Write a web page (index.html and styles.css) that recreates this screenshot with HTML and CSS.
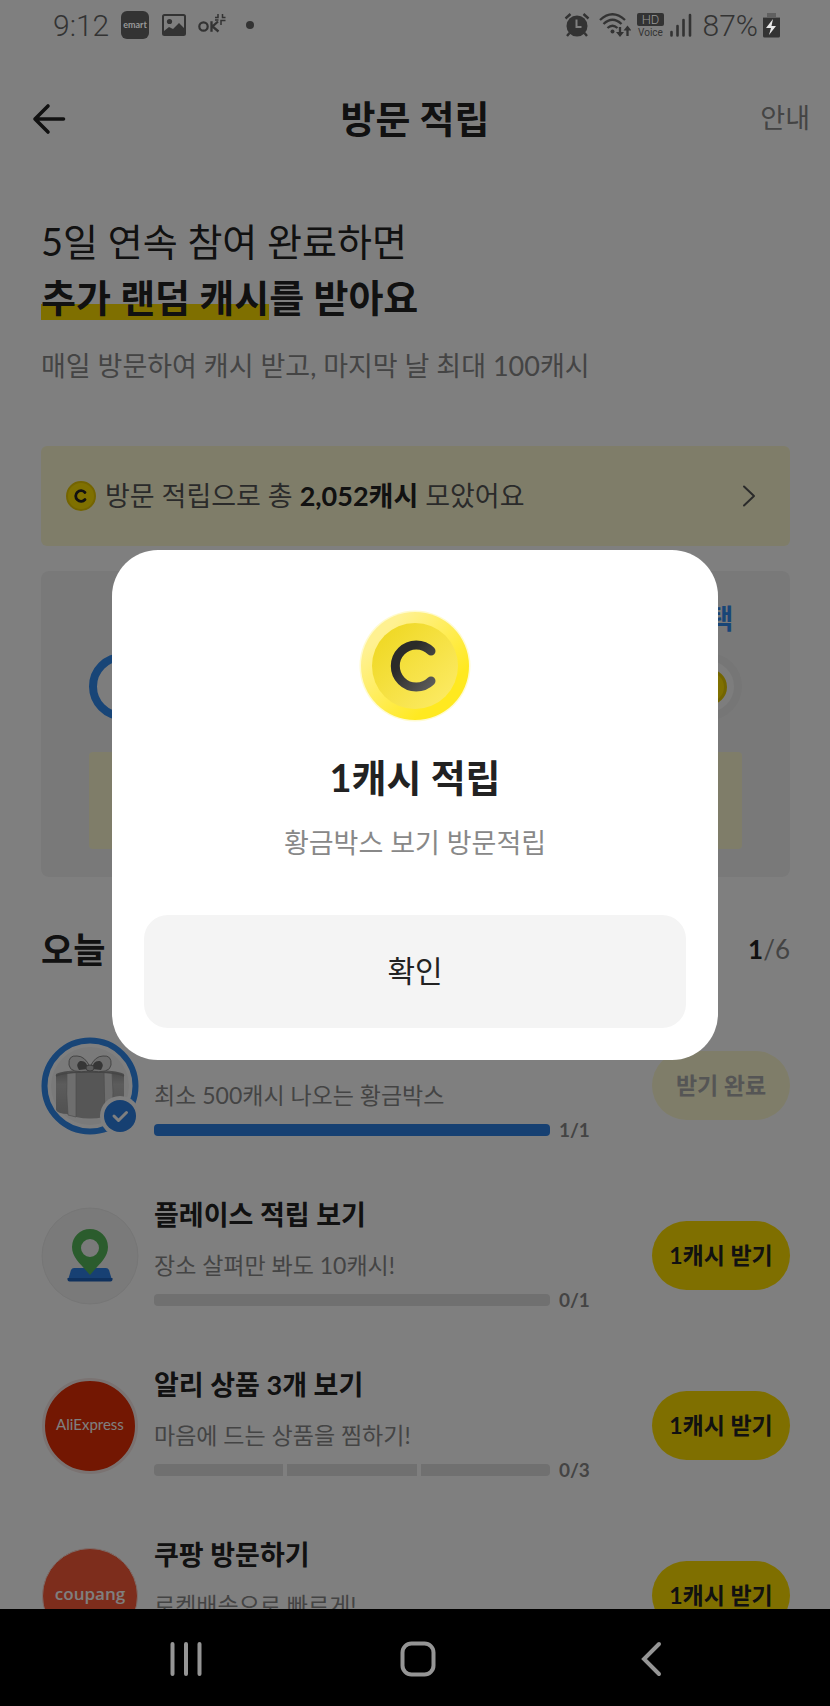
FILE: index.html
```html
<!DOCTYPE html>
<html lang="ko">
<head>
<meta charset="utf-8">
<meta name="viewport" content="width=device-width, initial-scale=1">
<title>방문 적립</title>
<link rel="stylesheet" href="styles.css">
</head>
<body>
<div class="device">
  <div class="app">
    <div class="status">
      <span class="status-time">9:12</span>
      <svg class="ic-emart" width="28" height="28" viewBox="0 0 28 28"><rect width="28" height="28" rx="6" fill="#333"/><text x="14" y="17" text-anchor="middle" font-family="Lato, sans-serif" font-weight="700" font-size="9" fill="#999">emart</text></svg>
      <svg class="ic-photo" width="24" height="22" viewBox="0 0 24 22"><rect x="1" y="1" width="22" height="20" rx="1.500" fill="none" stroke="#333" stroke-width="2"/><circle cx="7.500" cy="7.500" r="2.600" fill="#333"/><path d="M2 17l5-4 4 2 6-6 5 5v7H2z" fill="#333"/></svg>
      <svg class="ic-ok" width="28" height="24" viewBox="0 0 28 24"><circle cx="5.500" cy="13.500" r="4.200" fill="none" stroke="#333" stroke-width="2.200"/><path d="M13.500 8.300v10.400M20 8.500l-5.500 5 6 5" fill="none" stroke="#333" stroke-width="2.300"/><path d="M17 4.500h3V1M27.500 4.500h-3V1M17 7h3.500M23 12V7.500h4.500" fill="none" stroke="#333" stroke-width="1.500"/></svg>
      <span class="dot"></span>
      <span class="status-space"></span>
      <svg class="ic-alarm" width="26" height="26" viewBox="0 0 26 26"><circle cx="13" cy="14" r="10.500" fill="#333"/><path d="M1.500 6.500l5-4.500M24.500 6.500l-5-4.500M5.500 21l-2.500 3M20.500 21l2.500 3" stroke="#333" stroke-width="2.400"/><path d="M12.500 7.500V15h5" fill="none" stroke="#808080" stroke-width="2"/></svg>
      <svg class="ic-wifi" width="32" height="26" viewBox="0 0 32 26"><g fill="none" stroke="#333" stroke-width="2.300"><path d="M1 8q12.500-11.500 25 0M4.500 12q9-8.500 18 0M8.500 16q5-4.500 10 0"/><path d="M21 15v7M28.500 24v-7"/></g><circle cx="13.500" cy="19.500" r="2" fill="#333"/><path d="M17 20h8l-4 5zM24.500 18.500h8l-4-5z" fill="#333"/></svg>
      <svg class="ic-hd" width="27" height="24" viewBox="0 0 27 24"><rect width="27" height="13" rx="2" fill="#333"/><text x="13.500" y="11" text-anchor="middle" font-family="Roboto, sans-serif" font-size="13" fill="#999">HD</text><text x="13.500" y="22.500" text-anchor="middle" font-family="Roboto, sans-serif" font-weight="400" font-size="10" fill="#333">Voice</text></svg>
      <svg class="ic-signal" width="22" height="24" viewBox="0 0 22 24"><path d="M1.500 19v3.500M7.500 13v9.500M13.500 7v15.500M20 2v20.500" stroke="#333" stroke-width="2.600" stroke-linecap="round"/></svg>
      <span class="status-pct">87%</span>
      <svg class="ic-batt" width="17" height="26" viewBox="0 0 17 26"><path d="M4 1h9v4h4v3H0V5h4z" fill="#606060"/><path d="M0 6h17v18a1.500 1.500 0 0 1-1.500 1.500h-14A1.500 1.500 0 0 1 0 24z" fill="#333"/><path d="M10 7L3 16h5l-2 7 7-9H8.500z" fill="#e8e8e8"/></svg>
    </div>

    <header class="topbar">
      <button class="back" type="button" aria-label="뒤로"><svg width="34" height="32" viewBox="0 0 34 32"><path d="M16 3L3 16l13 13M3 16h28.500" fill="none" stroke="#222" stroke-width="3.600" stroke-linecap="round" stroke-linejoin="round"/></svg></button>
      <h1>방문 적립</h1>
      <a class="guide" href="#guide">안내</a>
    </header>

    <main class="content">
      <section class="intro">
        <h2>5일 연속 참여 완료하면<br><strong><mark>추가 랜덤 캐시</mark>를 받아요</strong></h2>
        <p>매일 방문하여 캐시 받고, 마지막 날 최대 100캐시</p>
      </section>

      <a class="banner" href="#history">
        <svg width="30" height="30" viewBox="0 0 30 30"><circle cx="15" cy="15" r="14" fill="#ffe000" stroke="#e8c900" stroke-width="2"/><path d="M19 11.500a5.300 5.300 0 1 0 0 7" fill="none" stroke="#222" stroke-width="2.800" stroke-linecap="round"/></svg>
        <span>방문 적립으로 총 <b>2,052캐시</b> 모았어요</span>
        <svg class="chev" width="14" height="22" viewBox="0 0 14 22"><path d="M2 1.500L12 11 2 20.500" fill="none" stroke="#555" stroke-width="2" stroke-linecap="round" stroke-linejoin="round"/></svg>
      </a>

      <section class="stamps">
        <div class="stamp-row">
          <div class="stamp"><span class="stamp-ring done"></span></div>
          <div class="stamp"><span class="stamp-label">혜택</span><span class="stamp-ring"><span class="mini-coin"></span></span></div>
        </div>
        <div class="stamp-note"></div>
      </section>

      <div class="section-head"><h3>오늘</h3><span class="count"><b>1</b>/6</span></div>

      <ul class="tasks">
        <li class="task">
          <svg class="task-icon" width="98" height="98" viewBox="0 0 98 98">
            <defs><linearGradient id="giftShade" x1="0" x2="0" y1="0" y2="1"><stop offset="0" stop-color="#8f8f8f"/><stop offset=".3" stop-color="#b8b8b8"/><stop offset="1" stop-color="#a0a0a0"/></linearGradient></defs>
            <circle cx="49" cy="49" r="45.500" fill="#fff" stroke="#318aef" stroke-width="6"/><circle cx="49" cy="49" r="39" fill="#f4f4f4"/>
            <path d="M15 37q8-4 34-4t34 4v36q-2 4-12 4-12 4-22 4t-22-4q-10 0-12-4z" fill="url(#giftShade)"/>
            <path d="M35 36q14-3 28 0v44q-14 3-28 0z" fill="#acacac"/>
            <path d="M26 35l9-1v46l-8-2q-2-20-1-43zM63 34l8 1q2 20 0 43l-7 2z" fill="#dcdcdc" stroke="#999" stroke-width=".7"/>
            <path d="M15 39q8-4 34-4t34 4" fill="none" stroke="#8c8c8c" stroke-width="1.500"/>
            <path d="M49 34q-20 3-21-6-1-10 8-9 8 0 13 11 5-11 13-11 9-1 8 9-1 9-21 6z" fill="#dcdcdc" stroke="#888" stroke-width="1"/>
            <path d="M47 32q-1-9-8-8-5 3-1 9zM51 32q1-9 8-8 5 3 1 9z" fill="#6c6c6c"/><ellipse cx="49" cy="31" rx="4" ry="3" fill="#bbb" stroke="#777"/>
            <circle cx="79" cy="79" r="20" fill="#fff"/><circle cx="79" cy="79" r="16" fill="#2c80e4"/><path d="M73 79l4.500 4.500 8-8" fill="none" stroke="#fff" stroke-width="3" stroke-linecap="round" stroke-linejoin="round"/>
          </svg>
          <div class="task-body"><h4>황금박스 보기</h4><p>최소 500캐시 나오는 황금박스</p><div class="progress"><div class="bar"><i class="on"></i></div><span>1/1</span></div></div>
          <button class="claim" type="button" disabled>받기 완료</button>
        </li>
        <li class="task">
          <svg class="task-icon" width="98" height="98" viewBox="0 0 98 98">
            <circle cx="49" cy="49" r="48" fill="#f4f4f4" stroke="#ececec"/>
            <path d="M33 61h32q2 0 3 2l3 10H27l3-10q1-2 3-2z" fill="#2f80e6"/><path d="M26.500 71h45v1.500q0 2-2 2h-41q-2 0-2-2z" fill="#1f62bd"/>
            <path d="M49 22a18 18 0 0 1 18 18c0 11-9 17-18 28-9-11-18-17-18-28a18 18 0 0 1 18-18zm0 10a9 9 0 1 0 0 18 9 9 0 0 0 0-18z" fill="#56b95a" fill-rule="evenodd"/>
          </svg>
          <div class="task-body"><h4>플레이스 적립 보기</h4><p>장소 살펴만 봐도 10캐시!</p><div class="progress"><div class="bar"><i></i></div><span>0/1</span></div></div>
          <button class="claim" type="button">1캐시 받기</button>
        </li>
        <li class="task">
          <svg class="task-icon" width="98" height="98" viewBox="0 0 98 98"><circle cx="49" cy="49" r="46.500" fill="#e62e04" stroke="#f5e6e4" stroke-width="3"/><text x="49" y="53" text-anchor="middle" font-family="Lato, sans-serif" font-size="15" fill="#fff">AliExpress</text></svg>
          <div class="task-body"><h4>알리 상품 3개 보기</h4><p>마음에 드는 상품을 찜하기!</p><div class="progress"><div class="bar"><i></i><i></i><i></i></div><span>0/3</span></div></div>
          <button class="claim" type="button">1캐시 받기</button>
        </li>
        <li class="task">
          <svg class="task-icon" width="98" height="98" viewBox="0 0 98 98"><circle cx="49" cy="49" r="47.500" fill="#fb5a38" stroke="#f8dcd6"/><text x="49" y="53" text-anchor="middle" font-family="'Open Sans', sans-serif" font-weight="600" font-size="17" fill="#fff">coupang</text></svg>
          <div class="task-body"><h4>쿠팡 방문하기</h4><p>로켓배송으로 빠르게!</p><div class="progress"><div class="bar"><i></i></div><span>0/1</span></div></div>
          <button class="claim" type="button">1캐시 받기</button>
        </li>
      </ul>
    </main>

    <div class="scrim">
      <div class="modal" role="dialog" aria-modal="true" aria-labelledby="modal-title">
        <svg width="116" height="116" viewBox="0 0 116 116">
          <defs>
            <linearGradient id="rim" x1="0" y1="0" x2="1" y2="1"><stop offset=".2" stop-color="#fff191"/><stop offset=".75" stop-color="#ffe920"/></linearGradient>
            <linearGradient id="face" x1="0" y1="0" x2="1" y2="1"><stop offset=".1" stop-color="#efd823"/><stop offset=".85" stop-color="#fbe95f"/></linearGradient>
            <linearGradient id="letter" x1="0" y1="0" x2="1" y2="1"><stop offset=".3" stop-color="#2b2b29"/><stop offset="1" stop-color="#5c5c5a"/></linearGradient>
          </defs>
          <circle cx="58" cy="57" r="55.500" fill="#fffbd0"/><circle cx="58" cy="57" r="54" fill="url(#rim)"/><circle cx="58" cy="57" r="43" fill="url(#face)"/>
          <path d="M74 42A21 21 0 1 0 74 72" fill="none" stroke="url(#letter)" stroke-width="9" stroke-linecap="round"/>
        </svg>
        <h2 id="modal-title">1캐시 적립</h2>
        <p>황금박스 보기 방문적립</p>
        <button class="confirm" type="button">확인</button>
      </div>
    </div>
  </div>

  <nav class="sysnav">
    <button type="button" aria-label="최근 앱"><svg width="32" height="36" viewBox="0 0 32 36"><path d="M2.500 3v30M16 3v30M29.500 3v30" stroke="#959595" stroke-width="4" stroke-linecap="round"/></svg></button>
    <button type="button" aria-label="홈"><svg width="36" height="36" viewBox="0 0 36 36"><rect x="2.500" y="2.500" width="31" height="31" rx="9" fill="none" stroke="#959595" stroke-width="4"/></svg></button>
    <button type="button" aria-label="뒤로 가기"><svg width="22" height="36" viewBox="0 0 22 36"><path d="M19 3L4 18l15 15" fill="none" stroke="#959595" stroke-width="4" stroke-linecap="round"/></svg></button>
  </nav>
</div>
</body>
</html>
```
FILE: styles.css
```css
* { box-sizing: border-box; }
body, h1, h2, h3, h4, p, ul { margin: 0; padding: 0; }
body {
  font-family: Lato, "Noto Sans CJK KR", sans-serif;
  color: #222;
  background: #fff;
}
button { border: 0; padding: 0; background: none; font: inherit; color: inherit; }
a { color: inherit; text-decoration: none; }
svg { display: block; flex: none; }

.device { display: flex; flex-direction: column; height: 100vh; background: #000; }
.app { position: relative; flex: 1; min-height: 0; overflow: hidden; background: #fff; }

/* Status bar stays above the scrim */
.status {
  position: relative;
  z-index: 2;
  display: flex;
  align-items: center;
  height: 50px;
  padding: 0 50px 0 53px;
  font-family: Roboto, sans-serif;
  font-weight: 300;
  font-size: 30px;
  color: #333;
}
.status-space { flex: 1; }
.ic-emart { margin-left: 12px; }
.ic-photo { margin-left: 13px; }
.ic-ok { margin-left: 12px; }
.dot { width: 8px; height: 8px; margin-left: 20px; border-radius: 50%; background: #333; }
.ic-wifi { margin-left: 9px; }
.ic-hd { margin-left: 6px; }
.ic-signal { margin: 0 11px 0 6px; }
.ic-batt { margin-left: 5px; }

.topbar {
  display: grid;
  grid-template-columns: 1fr auto 1fr;
  align-items: center;
  height: 136px;
  padding: 0 20px;
}
.topbar h1 { font-size: 38px; line-height: 56px; }
.back { justify-self: start; padding: 2px 0 0 12px; }
.guide { justify-self: end; font-size: 27px; line-height: 40px; color: #888; }

.content { padding: 27px 40px 0 41px; }
.intro h2 { font-size: 38px; font-weight: 400; line-height: 56px; }
.intro mark { color: inherit; background: linear-gradient(#ffdf00, #ffdf00) 0 100% / 100% 16px no-repeat; }
.intro p { margin-top: 21px; font-size: 27px; line-height: 40px; color: #888; }

.banner {
  display: flex;
  align-items: center;
  gap: 9px;
  height: 100px;
  margin-top: 60px;
  padding: 0 34px 0 25px;
  border-radius: 6px;
  background: #fefbd3;
  font-size: 27px;
  line-height: 40px;
  color: #555;
}
.banner b { color: #222; }
.chev { margin-left: auto; }

.stamps { margin-top: 25px; padding: 28px 48px; border-radius: 8px; background: #f3f3f3; }
.stamp-row { display: flex; justify-content: space-between; align-items: flex-end; }
.stamp { display: flex; flex-direction: column; align-items: center; gap: 14px; width: 67px; }
.stamp-label { font-size: 27px; line-height: 40px; font-weight: 700; color: #318aef; }
.stamp-ring {
  display: grid;
  place-items: center;
  width: 67px;
  height: 67px;
  border: 8px solid #ececec;
  border-radius: 50%;
  background: #fafafa;
}
.stamp-ring.done { border-color: #318aef; }
.mini-coin { width: 36px; height: 36px; border: 3px solid #e6cb00; border-radius: 50%; background: #ffe000; }
.stamp-note { height: 97px; margin-top: 32px; border-radius: 4px; background: #fefbd3; }

.section-head {
  display: flex;
  justify-content: space-between;
  align-items: center;
  margin-top: 44px;
  line-height: 56px;
}
.section-head h3 { font-size: 35px; }
.count { font-size: 26px; color: #888; }
.count b { color: #222; }

.tasks { display: grid; gap: 53px; margin-top: 50px; list-style: none; }
.task { display: grid; grid-template-columns: 98px 1fr 138px; align-items: center; }
.task-body { margin: 0 63px 0 15px; }
.task h4 { font-size: 27px; line-height: 36px; }
.task p { margin-top: 16px; font-size: 23px; line-height: 32px; color: #888; white-space: nowrap; }
.progress { display: flex; align-items: center; gap: 9px; margin-top: 5px; }
.progress span { width: 30px; font-size: 19px; font-weight: 700; line-height: 28px; color: #888; }
.bar { display: flex; flex: 1; gap: 4px; height: 12px; border-radius: 4px; overflow: hidden; }
.bar i { flex: 1; background: #e0e0e0; }
.bar .on { background: #2c80e4; }
.claim {
  height: 69px;
  padding-bottom: 4px;
  border-radius: 35px;
  background: #ffdf00;
  color: #222;
  font-size: 23px;
  font-weight: 700;
}
.claim:disabled { background: #fefbd3; color: #aaa; }

.scrim {
  position: absolute;
  inset: 0;
  z-index: 1;
  display: grid;
  align-items: center;
  padding: 0 112px;
  background: rgba(0, 0, 0, .5);
}
.modal {
  display: flex;
  flex-direction: column;
  align-items: center;
  padding: 59px 32px 32px;
  border-radius: 46px;
  background: #fff;
}
.modal h2 { margin-top: 24px; font-size: 38px; line-height: 56px; }
.modal p { margin-top: 18px; font-size: 27px; line-height: 40px; color: #888; }
.confirm {
  width: 100%;
  height: 113px;
  margin-top: 52px;
  padding-bottom: 5px;
  border-radius: 24px;
  background: #f4f4f4;
  font-size: 30px;
}

.sysnav {
  display: grid;
  grid-template-columns: repeat(3, 1fr);
  justify-items: center;
  align-items: center;
  height: 97px;
  padding: 2px 63px 0 70px;
  background: #000;
}
```
